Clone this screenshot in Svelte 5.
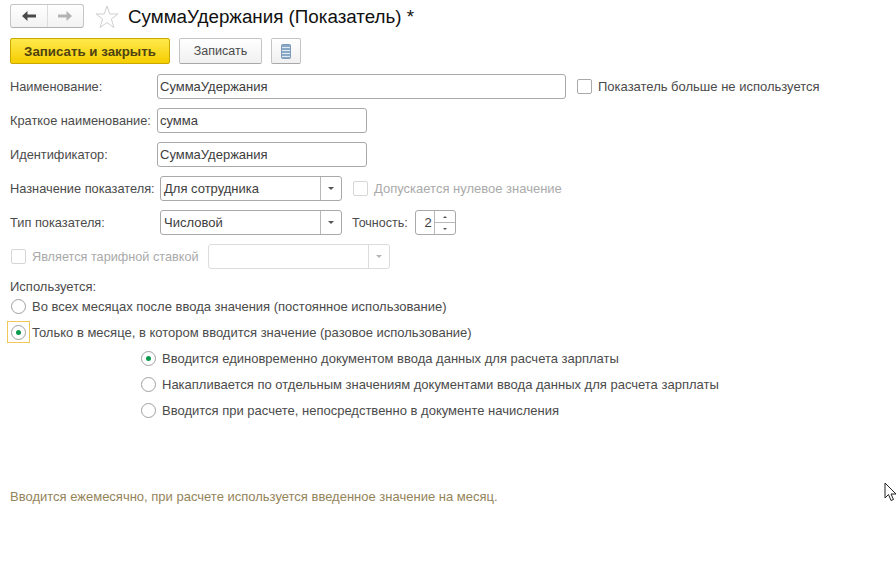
<script>
	const subOptions = [
		{ text: 'Вводится единовременно документом ввода данных для расчета зарплаты', on: true },
		{ text: 'Накапливается по отдельным значениям документами ввода данных для расчета зарплаты', on: false },
		{ text: 'Вводится при расчете, непосредственно в документе начисления', on: false }
	];
</script>

<div class="page">
	<div class="head">
		<div class="nav">
			<button class="nav-btn">
				<svg width="16" height="12" viewBox="0 0 16 12"><path d="M1 6l5.500-5v3.500H15v3H6.500V11z" fill="#4a4a4a" /></svg>
			</button>
			<button class="nav-btn">
				<svg width="16" height="12" viewBox="0 0 16 12"><path d="M15 6l-5.500-5v3.500H1v3h8.500V11z" fill="#b4b4b4" /></svg>
			</button>
		</div>
		<svg class="star" width="24" height="24" viewBox="0 0 24 24"><path d="M12 1l2.800 8h8.200l-6.600 5 2.500 8.500L12 17.500l-6.900 5L7.600 14 1 9h8.200z" fill="#fff" stroke="#cfcfcf" /></svg>
		<h1>СуммаУдержания (Показатель) *</h1>
	</div>

	<div class="toolbar">
		<button class="btn primary">Записать и закрыть</button>
		<button class="btn">Записать</button>
		<button class="btn icon">
			<svg width="10" height="15" viewBox="0 0 10 15">
				<rect x="0.500" y="0.500" width="9" height="14" rx="1" fill="#8aa9c6" stroke="#7c9ab8" />
				<path d="M1 3.500h8M1 6.500h8M1 9.500h8M1 12.500h8" stroke="#dfe8f0" />
			</svg>
		</button>
	</div>

	<div class="row">
		<span class="label">Наименование:</span>
		<div class="input name">СуммаУдержания</div>
		<span class="check first"></span>
		<span class="text">Показатель больше не используется</span>
	</div>
	<div class="row">
		<span class="label">Краткое наименование:</span>
		<div class="input short">сумма</div>
	</div>
	<div class="row">
		<span class="label">Идентификатор:</span>
		<div class="input short">СуммаУдержания</div>
	</div>
	<div class="row">
		<span class="label wide">Назначение показателя:</span>
		<div class="input select">
			<span class="value">Для сотрудника</span>
			<span class="drop"><i></i></span>
		</div>
		<span class="check off second"></span>
		<span class="text muted">Допускается нулевое значение</span>
	</div>
	<div class="row">
		<span class="label wide">Тип показателя:</span>
		<div class="input select">
			<span class="value">Числовой</span>
			<span class="drop"><i></i></span>
		</div>
		<span class="text prec">Точность:</span>
		<div class="input spin">
			<span class="num">2</span>
			<span class="arrows">
				<span><i class="up"></i></span>
				<span><i></i></span>
			</span>
		</div>
	</div>
	<div class="row">
		<span class="check off tariff"></span>
		<span class="text muted tariff-text">Является тарифной ставкой</span>
		<div class="input select disabled">
			<span class="value"></span>
			<span class="drop"><i></i></span>
		</div>
	</div>

	<div class="used">Используется:</div>
	<div class="radio-row">
		<span class="radio"></span>
		<span class="text">Во всех месяцах после ввода значения (постоянное использование)</span>
	</div>
	<div class="radio-row">
		<span class="focus"><span class="radio on"></span></span>
		<span class="text">Только в месяце, в котором вводится значение (разовое использование)</span>
	</div>
	{#each subOptions as opt}
		<div class="radio-row sub">
			<span class="radio" class:on={opt.on}></span>
			<span class="text">{opt.text}</span>
		</div>
	{/each}

	<p class="note">Вводится ежемесячно, при расчете используется введенное значение на месяц.</p>

	<svg class="cursor" width="13" height="20" viewBox="0 0 13 20">
		<path d="M1 1v15l3.500-3.500 2.500 6 2.500-1-2.500-5.500H12z" fill="#fff" stroke="#222" />
	</svg>
</div>

<style>
	:global(body) {
		background: #fff;
	}

	.page {
		position: relative;
		width: 896px;
		height: 580px;
		overflow: hidden;
		padding-left: 10px;
		box-sizing: border-box;
		font-family: "Liberation Sans", Arial, sans-serif;
		font-size: 13px;
		color: #4b4b4b;
	}

	.head {
		display: flex;
		align-items: center;
		height: 30px;
		padding-top: 2px;
	}

	.nav {
		display: flex;
		box-sizing: border-box;
		width: 74px;
		height: 24px;
		border: 1px solid #c6c6c6;
		border-bottom-color: #b0b0b0;
		border-radius: 3px;
		background: linear-gradient(#fff, #f2f2f2);
		margin: 0 11px 2px 0;
	}

	.nav-btn {
		flex: 1;
		padding: 0;
		border: 0;
		background: none;
		display: flex;
		align-items: center;
		justify-content: center;
	}

	.nav-btn + .nav-btn {
		border-left: 1px solid #dcdcdc;
	}

	.star {
		margin: 0 9px 1px 0;
	}

	h1 {
		margin: 0;
		font-size: 18.800px;
		font-weight: 400;
		color: #111;
	}

	.toolbar {
		display: flex;
		gap: 9px;
		margin-top: 6px;
		height: 26px;
	}

	.btn {
		height: 26px;
		width: 83px;
		padding: 0;
		font: inherit;
		font-size: 12.500px;
		color: #4b4b4b;
		border: 1px solid #c4c4c4;
		border-bottom-color: #a8a8a8;
		border-radius: 2px;
		background: linear-gradient(#fff, #f0f0f0);
	}

	.btn.primary {
		width: 160px;
		font-size: 13.300px;
		font-weight: 700;
		color: #4f4310;
		border-color: #c9a800;
		background: linear-gradient(#ffe94d, #f5cd00);
	}

	.btn.icon {
		width: 30px;
		display: flex;
		align-items: center;
		justify-content: center;
	}

	.row {
		display: flex;
		align-items: center;
		height: 25px;
		margin-bottom: 9px;
	}

	.toolbar + .row {
		margin-top: 10px;
	}

	.label {
		width: 147px;
		flex: none;
		white-space: nowrap;
		font-size: 12.800px;
	}

	.label.wide {
		width: 150px;
	}

	.input {
		box-sizing: border-box;
		height: 25px;
		border: 1px solid #a9a9a9;
		border-radius: 3px;
		background: #fff;
		display: flex;
		align-items: center;
		padding-left: 2px;
		color: #3d3d3d;
	}

	.input.name {
		width: 409px;
	}

	.input.short {
		width: 210px;
	}

	.input.select {
		width: 182px;
		padding: 0;
	}

	.value {
		flex: 1;
		padding-left: 3px;
	}

	.drop {
		width: 20px;
		height: 100%;
		border-left: 1px solid #b8b8b8;
		display: flex;
		align-items: center;
		justify-content: center;
	}

	.drop i {
		width: 0;
		height: 0;
		border-left: 3px solid transparent;
		border-right: 3px solid transparent;
		border-top: 3px solid #555;
	}

	.input.disabled {
		margin-left: 9px;
		border-color: #dcdcdc;
	}

	.input.disabled .drop {
		border-left-color: #dcdcdc;
	}

	.input.disabled .drop i {
		border-top-color: #b5b5b5;
	}

	.check {
		width: 13px;
		height: 13px;
		flex: none;
		border: 1px solid #a9a9a9;
		border-radius: 2px;
		background: #fff;
	}

	.check.off {
		border-color: #d6d6d6;
	}

	.check.first {
		margin: 0 6px 0 11px;
	}

	.check.second {
		margin: 0 6px 0 11px;
	}

	.check.tariff {
		margin: 0 6px 0 1px;
	}

	.text {
		white-space: nowrap;
	}

	.tariff-text {
		font-size: 12.700px;
	}

	.muted {
		color: #aaa;
	}

	.prec {
		margin: 0 7px 0 10px;
		font-size: 12.500px;
	}

	.input.spin {
		width: 41px;
		padding: 0;
	}

	.num {
		flex: 1;
		text-align: right;
		padding-right: 2px;
	}

	.arrows {
		width: 20px;
		height: 100%;
		border-left: 1px solid #b8b8b8;
		display: flex;
		flex-direction: column;
	}

	.arrows span {
		flex: 1;
		display: flex;
		align-items: center;
		justify-content: center;
	}

	.arrows span + span {
		border-top: 1px solid #b8b8b8;
	}

	.arrows i {
		width: 0;
		height: 0;
		border-left: 2px solid transparent;
		border-right: 2px solid transparent;
		border-top: 2px solid #555;
	}

	.arrows i.up {
		border-top: 0;
		border-bottom: 2px solid #555;
	}

	.used {
		margin-top: 7px;
		height: 17px;
		line-height: 17px;
	}

	.radio-row {
		display: flex;
		align-items: center;
		height: 26px;
		gap: 6px;
		padding-left: 1px;
	}

	.used + .radio-row {
		margin-top: -2px;
	}

	.radio-row.sub {
		padding-left: 131px;
	}

	.radio {
		box-sizing: border-box;
		width: 15px;
		height: 15px;
		flex: none;
		border: 1px solid #a0a0a0;
		border-radius: 50%;
		background: #fff;
		position: relative;
	}

	.radio.on::after {
		content: "";
		position: absolute;
		left: 4px;
		top: 4px;
		width: 5px;
		height: 5px;
		border-radius: 50%;
		background: #0c9a4f;
	}

	.focus {
		width: 23px;
		height: 22px;
		box-sizing: border-box;
		margin: 0 -4px 0 -4px;
		border: 1px solid #f0c85a;
		display: flex;
		align-items: center;
		justify-content: center;
	}

	.note {
		margin: 66px 0 0;
		color: #94845a;
	}

	.cursor {
		position: absolute;
		left: 884px;
		top: 482px;
	}
</style>
